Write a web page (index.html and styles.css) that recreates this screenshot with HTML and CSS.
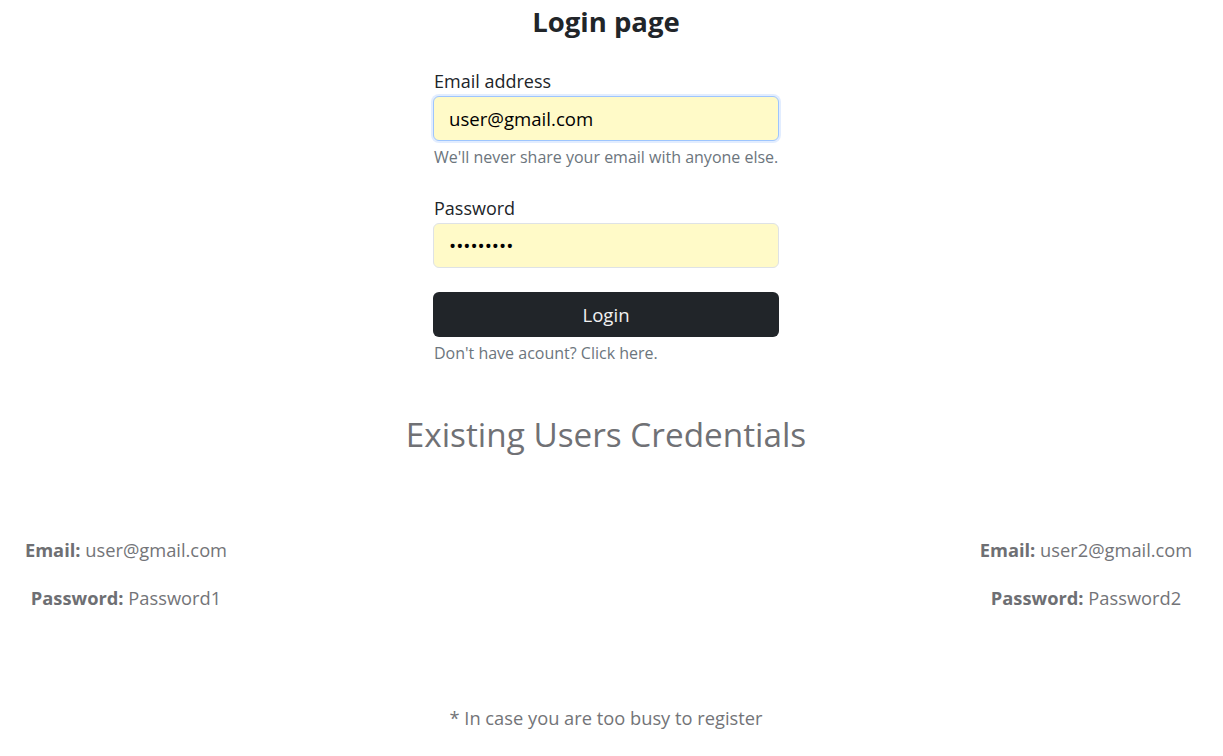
FILE: index.html
```html
<!DOCTYPE html>
<html lang="en">
<head>
<meta charset="utf-8">
<title>Login page</title>
<link rel="stylesheet" href="styles.css">
</head>
<body>
<main class="page">
  <h1 class="title">Login page</h1>
  <form class="login-form">
    <div class="field">
      <label class="field-label" for="email">Email address</label>
      <input class="field-input is-focused" id="email" type="email" value="user@gmail.com">
      <div class="field-help">We'll never share your email with anyone else.</div>
    </div>
    <div class="field field-password">
      <label class="field-label" for="password">Password</label>
      <input class="field-input" id="password" type="password" value="Password1">
    </div>
    <button class="btn-login" type="button">Login</button>
    <div class="register-hint">Don't have acount? <span class="register-link">Click here.</span></div>
  </form>

  <h2 class="creds-title">Existing Users Credentials</h2>
  <section class="creds-row">
    <div class="creds-card creds-left">
      <p class="creds-line"><strong>Email:</strong> user@gmail.com</p>
      <p class="creds-line"><strong>Password:</strong> Password1</p>
    </div>
    <div class="creds-card creds-right">
      <p class="creds-line"><strong>Email:</strong> user2@gmail.com</p>
      <p class="creds-line"><strong>Password:</strong> Password2</p>
    </div>
  </section>
  <p class="footnote">* In case you are too busy to register</p>
</main>
</body>
</html>
```

FILE: styles.css
```css
* { box-sizing: border-box; }
html, body { margin: 0; padding: 0; background: #fff; }
body {
  font-family: "Open Sans", "Noto Sans", "Liberation Sans", sans-serif;
  color: #212529;
  font-size: 16px;
}
.page {
  display: flex;
  flex-direction: column;
  align-items: center;
  padding-right: 11px;
}

.title {
  margin: 4px 0 0;
  font-size: 27.5px;
  line-height: 36px;
  font-weight: 700;
  color: #212529;
  text-align: center;
}

.login-form {
  width: 346px;
  margin-top: 29px;
  display: flex;
  flex-direction: column;
}
.field { display: flex; flex-direction: column; }
.field-label {
  font-size: 18px;
  line-height: 24px;
  margin-bottom: 3px;
  padding-left: 1px;
}
.field-input {
  height: 45px;
  width: 100%;
  padding: 0 15px;
  font-family: inherit;
  font-size: 18.6px;
  color: #000;
  background: #fffac8;
  border: 1px solid #dee2e6;
  border-radius: 6px;
  outline: none;
}
.field-input.is-focused {
  border-color: #9ec5fe;
  box-shadow: 0 0 0 2px rgba(13, 110, 253, 0.12);
}
#password { font-size: 19px; letter-spacing: 0; }
.field-help {
  margin-top: 6px;
  font-size: 16px;
  line-height: 21px;
  color: #6c757d;
  padding-left: 1px;
}
.field-password { margin-top: 28px; }

.btn-login {
  margin-top: 24px;
  height: 45px;
  width: 100%;
  border: none;
  border-radius: 6px;
  background: #212529;
  color: #f1f1f1;
  font-family: inherit;
  font-size: 18.6px;
}
.register-hint {
  margin-top: 5px;
  font-size: 16px;
  line-height: 22px;
  color: #6c757d;
  padding-left: 1px;
}

.creds-title {
  margin: 48px 0 0;
  font-size: 33.3px;
  line-height: 44px;
  font-weight: 400;
  color: #707175;
}

.creds-row {
  width: 100%;
  display: flex;
  justify-content: space-between;
  margin-top: 82px;
}
.creds-card {
  width: 252px;
  text-align: center;
  color: #737478;
}
.creds-line {
  margin: 0 0 24px;
  font-size: 18.3px;
  line-height: 24px;
}
.creds-line strong { font-weight: 700; color: #6e6f73; }

.footnote {
  margin: 72px 0 0;
  font-size: 18.3px;
  line-height: 24px;
  color: #737478;
  text-align: center;
}
```
